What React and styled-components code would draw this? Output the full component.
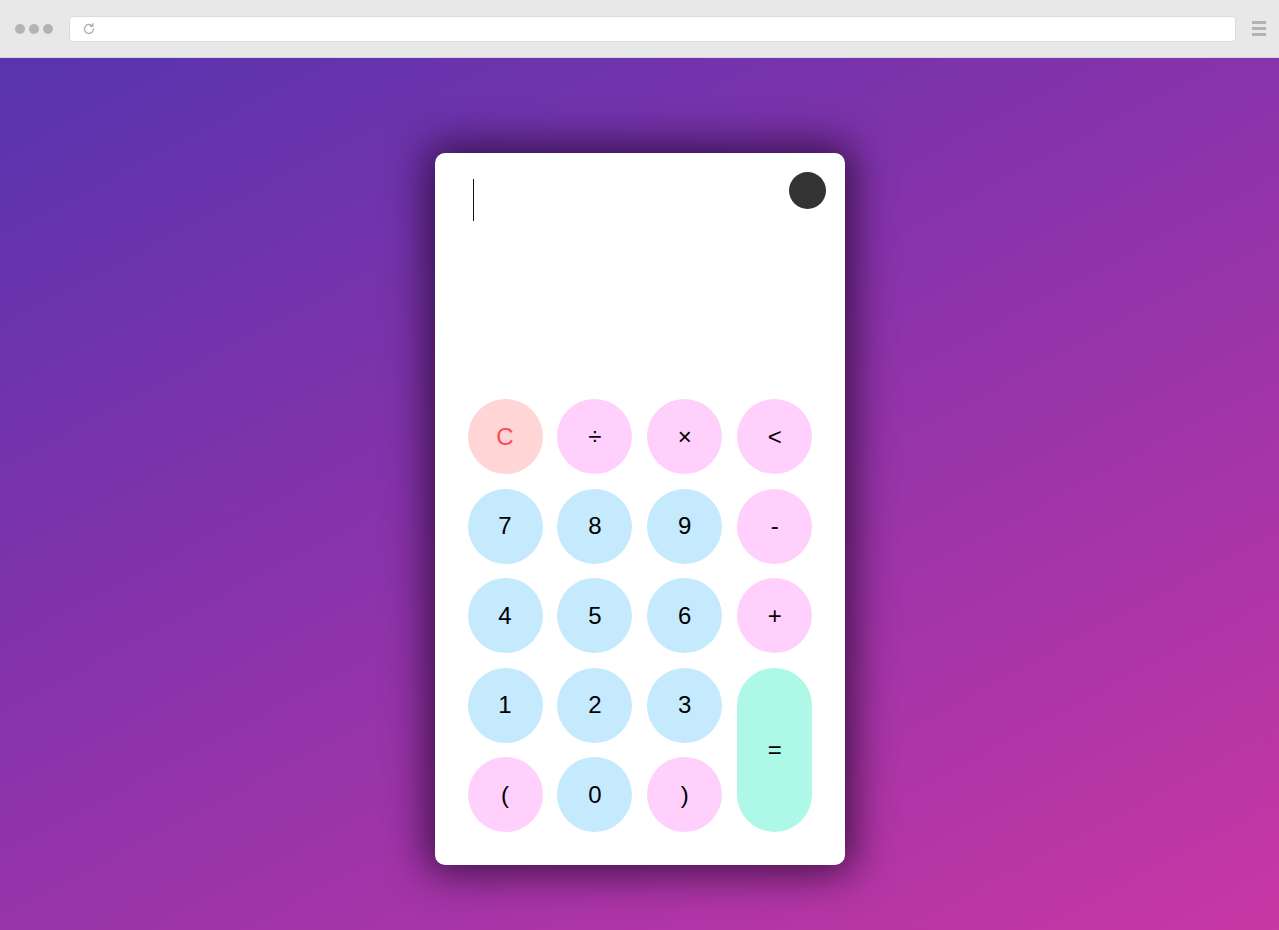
import React from "react";
import styled, { createGlobalStyle } from "styled-components";

const Global = createGlobalStyle`
  html, body { margin: 0; padding: 0; }
  body { font-family: "Liberation Sans", Arial, sans-serif; background: #fff; }
  * { box-sizing: border-box; }
`;

const Page = styled.div`
  width: 1279px;
  height: 930px;
  display: flex;
  flex-direction: column;
  overflow: hidden;
`;

const Chrome = styled.div`
  height: 58px;
  flex: none;
  background: #e8e8e8;
  border-bottom: 1px solid #d6d6d6;
  display: flex;
  align-items: center;
  padding: 0 13px 0 15px;
  gap: 16px;
`;

const Dots = styled.div`
  display: flex;
  gap: 4px;
`;

const Dot = styled.span`
  width: 10px;
  height: 10px;
  border-radius: 50%;
  background: #b3b3b3;
`;

const UrlBar = styled.div`
  flex: 1;
  height: 26px;
  background: #fff;
  border: 1px solid #dcdcdc;
  border-radius: 4px;
  display: flex;
  align-items: center;
  padding-left: 12px;
`;

const Menu = styled.div`
  width: 14px;
  display: flex;
  flex-direction: column;
  gap: 3px;
  span {
    height: 3px;
    background: #b3b3b3;
  }
`;

const Stage = styled.main`
  flex: 1;
  background: linear-gradient(152deg, #5734ae 0%, #8a33ab 45%, #c837a4 100%);
  display: flex;
  justify-content: center;
  align-items: flex-start;
  padding-top: 95px;
`;

const Card = styled.div`
  width: 410px;
  height: 712px;
  background: #fff;
  border-radius: 10px;
  box-shadow: 0 0 40px 8px rgba(35, 8, 45, 0.8);
  display: flex;
  flex-direction: column;
`;

const Display = styled.div`
  height: 246px;
  display: flex;
  justify-content: space-between;
  align-items: flex-start;
  padding: 19px 19px 0 38px;
`;

const Caret = styled.span`
  margin-top: 7px;
  width: 1px;
  height: 42px;
  background: #111;
`;

const Toggle = styled.button`
  width: 37px;
  height: 37px;
  border-radius: 50%;
  border: none;
  background: #333;
  padding: 0;
`;

const Keypad = styled.div`
  display: grid;
  grid-template-columns: repeat(4, 75px);
  grid-auto-rows: 75px;
  column-gap: 14.9px;
  row-gap: 14.5px;
  padding: 0 32px 33px 33px;
`;

const palette = {
  num: { bg: "#c5e9fd", fg: "#000" },
  op: { bg: "#ffd0fc", fg: "#000" },
  clear: { bg: "#ffd5d6", fg: "#ff4a5b" },
  eq: { bg: "#adf8e6", fg: "#000" },
};

const Key = styled.button`
  border: none;
  padding: 0;
  border-radius: 40px;
  background: ${(p) => palette[p.$kind].bg};
  color: ${(p) => palette[p.$kind].fg};
  font-family: "Liberation Sans", Arial, sans-serif;
  font-size: 24px;
  display: flex;
  align-items: center;
  justify-content: center;
  grid-row: ${(p) => (p.$tall ? "span 2" : "auto")};
`;

const keys = [
  ["C", "clear"], ["÷", "op"], ["×", "op"], ["<", "op"],
  ["7", "num"], ["8", "num"], ["9", "num"], ["-", "op"],
  ["4", "num"], ["5", "num"], ["6", "num"], ["+", "op"],
  ["1", "num"], ["2", "num"], ["3", "num"], ["=", "eq", true],
  ["(", "op"], ["0", "num"], [")", "op"],
];

export default function App() {
  return (
    <Page>
      <Global />
      <Chrome>
        <Dots>
          <Dot />
          <Dot />
          <Dot />
        </Dots>
        <UrlBar>
          <svg width="14" height="14" viewBox="0 0 14 14" fill="none">
            <path
              d="M11.5 7a4.5 4.5 0 1 1-1.4-3.3"
              stroke="#b0b0b0"
              strokeWidth="1.4"
              strokeLinecap="round"
            />
            <path d="M10.8 1.2v3h-3" stroke="#b0b0b0" strokeWidth="1.4" strokeLinejoin="round" />
          </svg>
        </UrlBar>
        <Menu>
          <span />
          <span />
          <span />
        </Menu>
      </Chrome>
      <Stage>
        <Card>
          <Display>
            <Caret />
            <Toggle aria-label="theme" />
          </Display>
          <Keypad>
            {keys.map(([label, kind, tall]) => (
              <Key key={label} $kind={kind} $tall={tall}>
                {label}
              </Key>
            ))}
          </Keypad>
        </Card>
      </Stage>
    </Page>
  );
}
